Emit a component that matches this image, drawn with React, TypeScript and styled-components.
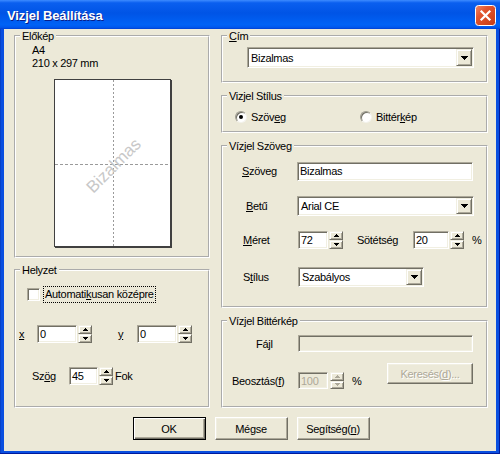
import React from 'react';
import styled, { createGlobalStyle } from 'styled-components';

const GlobalStyle = createGlobalStyle`
  html, body {
    margin: 0;
    padding: 0;
  }
  body {
    width: 500px;
    height: 454px;
    overflow: hidden;
    font-family: 'Liberation Sans', Arial, sans-serif;
    font-size: 11px;
    letter-spacing: -0.3px;
    color: #000;
    background: #ece9d8;
  }
`;

const Window = styled.div`
  width: 500px;
  height: 454px;
  display: flex;
  flex-direction: column;
  background: #0a4fe0;
`;

const TitleBar = styled.div`
  height: 29px;
  flex-shrink: 0;
  box-sizing: border-box;
  padding: 2px 4px 0 7px;
  display: flex;
  align-items: center;
  justify-content: space-between;
  background: linear-gradient(
    180deg,
    #3d8bff 0%,
    #0a5fef 10%,
    #0054e6 45%,
    #0062f6 85%,
    #0058ee 94%,
    #003fd2 100%
  );
`;

const Title = styled.span`
  color: #fff;
  font-weight: bold;
  font-size: 13px;
  letter-spacing: -0.1px;
  text-shadow: 1px 1px 0 #0a1e8a;
`;

const Frame = styled.div`
  flex: 1;
  display: flex;
  padding: 0 4px 3px 4px;
  box-shadow: inset -1px -1px 0 #001a9c, inset 1px 0 0 #0842c8;
`;

const Client = styled.div`
  flex: 1;
  display: flex;
  flex-direction: column;
  background: #ece9d8;
  padding: 1px 8px 11px 10px;
`;

const Columns = styled.div`
  display: flex;
  gap: 11px;
`;

const Column = styled.div<{ $w: number; $gap: number }>`
  width: ${(p) => p.$w}px;
  display: flex;
  flex-direction: column;
  gap: ${(p) => p.$gap}px;
`;

const Group = styled.fieldset<{ $h: number }>`
  margin: 0;
  padding: 0;
  min-width: 0;
  height: ${(p) => p.$h}px;
  box-sizing: border-box;
  border: 2px groove #fff;
`;

const Legend = styled.legend`
  margin-left: 4px;
  padding: 0 2px;
  font-size: 11px;
  line-height: 12px;
`;

const Key = styled.span`
  text-decoration: underline;
  text-underline-offset: 1px;
`;

const Info = styled.div`
  padding: 2px 0 0 16px;
  line-height: 13px;
`;

const Page = styled.div`
  position: relative;
  width: 117px;
  height: 168px;
  box-sizing: border-box;
  margin: 9px auto 0;
  background: #fff;
  border: 1px solid #404040;
  box-shadow: 1px 1px 0 #404040;
  overflow: hidden;

  &::before {
    content: '';
    position: absolute;
    top: 0;
    bottom: 0;
    left: 58px;
    width: 1px;
    background: repeating-linear-gradient(180deg, #9a9a9a 0 2px, transparent 2px 4px);
  }
  &::after {
    content: '';
    position: absolute;
    left: 0;
    right: 0;
    top: 84px;
    height: 1px;
    background: repeating-linear-gradient(90deg, #9a9a9a 0 3px, transparent 3px 5px);
  }
`;

const Watermark = styled.span`
  position: absolute;
  left: 50%;
  top: calc(50% + 3px);
  transform: translate(-47%, -50%) rotate(-45deg);
  font-size: 17px;
  letter-spacing: 0;
  color: #c8c8c8;
  white-space: nowrap;
  z-index: 1;
`;

const Row = styled.div<{ $top?: number; $pl?: number; $h?: number; $pr?: number; $align?: string }>`
  display: flex;
  align-items: ${(p) => p.$align ?? 'center'};
  margin-top: ${(p) => p.$top ?? 0}px;
  padding-left: ${(p) => p.$pl ?? 0}px;
  padding-right: ${(p) => p.$pr ?? 0}px;
  height: ${(p) => (p.$h ? `${p.$h}px` : 'auto')};
`;

const Inline = styled.div<{ $top?: number }>`
  display: flex;
  align-items: center;
  margin-top: ${(p) => p.$top ?? 0}px;
`;

const FieldLabel = styled.span<{ $w?: number; $pl?: number; $ml?: number }>`
  flex-shrink: 0;
  box-sizing: border-box;
  width: ${(p) => (p.$w ? `${p.$w}px` : 'auto')};
  padding-left: ${(p) => p.$pl ?? 0}px;
  margin-left: ${(p) => p.$ml ?? 0}px;
  white-space: nowrap;
`;

const TextBox = styled.div<{ $w: number; $h: number; $disabled?: boolean }>`
  flex-shrink: 0;
  width: ${(p) => p.$w}px;
  height: ${(p) => p.$h}px;
  box-sizing: border-box;
  display: flex;
  align-items: center;
  padding: 0 2px;
  background: ${(p) => (p.$disabled ? '#ece9d8' : '#fff')};
  color: ${(p) => (p.$disabled ? '#aca899' : '#000')};
  border: 1px solid;
  border-color: #aca899 #fff #fff #aca899;
  box-shadow: inset 1px 1px 0 #716f64, inset -1px -1px 0 #f1efe2;
  white-space: nowrap;
`;

const ComboBox = styled(TextBox)`
  justify-content: space-between;
  padding: 1px 1px 1px 3px;
`;

const Raised = styled.div`
  box-sizing: border-box;
  background: #ece9d8;
  border: 1px solid;
  border-color: #f1efe2 #716f64 #716f64 #f1efe2;
  box-shadow: inset 1px 1px 0 #fff, inset -1px -1px 0 #aca899;
  display: flex;
  align-items: center;
  justify-content: center;
`;

const DropButton = styled(Raised)`
  width: 16px;
  height: 100%;
  flex-shrink: 0;
`;

const Spin = styled.div<{ $h: number; $ml?: number }>`
  flex-shrink: 0;
  width: 14px;
  height: ${(p) => p.$h}px;
  margin-left: ${(p) => p.$ml ?? 1}px;
  display: flex;
  flex-direction: column;
`;

const SpinHalf = styled(Raised)`
  flex: 1;
`;

const CheckBox = styled.span`
  width: 13px;
  height: 13px;
  box-sizing: border-box;
  flex-shrink: 0;
  background: #fff;
  border: 1px solid;
  border-color: #aca899 #fff #fff #aca899;
  box-shadow: inset 1px 1px 0 #716f64, inset -1px -1px 0 #f1efe2;
`;

const FocusLabel = styled.span`
  margin-left: 3px;
  padding: 0 1px;
  line-height: 15px;
  border: 1px dotted #000;
  white-space: nowrap;
`;

const RadioOption = styled.div<{ $w?: number }>`
  display: flex;
  align-items: center;
  width: ${(p) => (p.$w ? `${p.$w}px` : 'auto')};
`;

const Radio = styled.span<{ $checked?: boolean }>`
  position: relative;
  width: 12px;
  height: 12px;
  box-sizing: border-box;
  border-radius: 50%;
  margin-right: 4px;
  background: radial-gradient(circle at 60% 60%, #fff 55%, #e6e4dc 100%);
  border: 1px solid;
  border-color: #9d9b90 #f4f3ee #f4f3ee #9d9b90;
  box-shadow: inset 1px 1px 0 #716f64;
  &::after {
    content: '';
    display: ${(p) => (p.$checked ? 'block' : 'none')};
    position: absolute;
    left: 3px;
    top: 3px;
    width: 4px;
    height: 4px;
    border-radius: 50%;
    background: #000;
  }
`;

const PushButton = styled.div<{ $w: number; $h: number; $default?: boolean; $disabled?: boolean }>`
  width: ${(p) => p.$w}px;
  height: ${(p) => p.$h}px;
  box-sizing: border-box;
  flex-shrink: 0;
  display: flex;
  align-items: center;
  justify-content: center;
  background: #ece9d8;
  color: ${(p) => (p.$disabled ? '#aca899' : '#000')};
  text-shadow: ${(p) => (p.$disabled ? '1px 1px 0 #fff' : 'none')};
  border: 1px solid;
  border-color: ${(p) => (p.$default ? '#000' : '#fff #716f64 #716f64 #fff')};
  box-shadow: ${(p) =>
    p.$default
      ? 'inset 1px 1px 0 #fff, inset -1px -1px 0 #716f64, inset -2px -2px 0 #aca899'
      : 'inset -1px -1px 0 #aca899, inset 1px 1px 0 #f1efe2'};
  white-space: nowrap;
`;

const PushAside = styled(PushButton)`
  margin-left: auto;
`;

const ButtonBar = styled.div`
  display: flex;
  justify-content: center;
  gap: 9px;
  margin-top: 9px;
`;

const Suffix = styled.span<{ $ml: number }>`
  margin-left: ${(p) => p.$ml}px;
`;

const ArrowUp = ({ color = '#000' }: { color?: string }) => (
  <svg width="5" height="3" viewBox="0 0 5 3">
    <path d="M2 0h1v1h1v1h1v1H0V2h1V1h1z" fill={color} />
  </svg>
);

const ArrowDown = ({ color = '#000' }: { color?: string }) => (
  <svg width="5" height="3" viewBox="0 0 5 3">
    <path d="M0 0h5v1H4v1H3v1H2V2H1V1H0z" fill={color} />
  </svg>
);

const ComboArrow = () => (
  <svg width="7" height="4" viewBox="0 0 7 4">
    <path d="M0 0h7v1H6v1H5v1H4v1H3V3H2V2H1V1H0z" fill="#000" />
  </svg>
);

const CloseIcon = () => (
  <svg width="21" height="21" viewBox="0 0 21 21">
    <defs>
      <linearGradient id="closeFill" x1="0" y1="0" x2="1" y2="1">
        <stop offset="0" stopColor="#f08a6a" />
        <stop offset="0.35" stopColor="#e2552f" />
        <stop offset="1" stopColor="#c43a14" />
      </linearGradient>
    </defs>
    <rect x="0.5" y="0.5" width="20" height="20" rx="3" fill="url(#closeFill)" stroke="#fff" />
    <path d="M6.5 6.5l8 8M14.5 6.5l-8 8" stroke="#fff" strokeWidth="2.2" strokeLinecap="square" />
  </svg>
);

const SpinBox = ({ h, ml, disabled }: { h: number; ml?: number; disabled?: boolean }) => {
  const c = disabled ? '#aca899' : '#000';
  return (
    <Spin $h={h} $ml={ml}>
      <SpinHalf>
        <ArrowUp color={c} />
      </SpinHalf>
      <SpinHalf>
        <ArrowDown color={c} />
      </SpinHalf>
    </Spin>
  );
};

const Dropdown = ({ w, h, value }: { w: number; h: number; value: string }) => (
  <ComboBox $w={w} $h={h}>
    <span>{value}</span>
    <DropButton>
      <ComboArrow />
    </DropButton>
  </ComboBox>
);

export default function App() {
  return (
    <>
      <GlobalStyle />
      <Window>
        <TitleBar>
          <Title>Vizjel Beállítása</Title>
          <CloseIcon />
        </TitleBar>
        <Frame>
          <Client>
            <Columns>
              <Column $w={196} $gap={6}>
                <Group $h={228}>
                  <Legend>Előkép</Legend>
                  <Info>
                    <div>A4</div>
                    <div>210 x 297 mm</div>
                  </Info>
                  <Page>
                    <Watermark>Bizalmas</Watermark>
                  </Page>
                </Group>

                <Group $h={144}>
                  <Legend>Helyzet</Legend>
                  <Row $top={10} $pl={11} $h={17}>
                    <CheckBox />
                    <FocusLabel>
                      Automati<Key>k</Key>usan középre
                    </FocusLabel>
                  </Row>
                  <Row $top={22} $pl={3} $h={18}>
                    <FieldLabel $w={18}>
                      <Key>x</Key>
                    </FieldLabel>
                    <TextBox $w={40} $h={18}>0</TextBox>
                    <SpinBox h={18} />
                    <FieldLabel $w={19} $ml={26}>
                      <Key>y</Key>
                    </FieldLabel>
                    <TextBox $w={40} $h={18}>0</TextBox>
                    <SpinBox h={18} />
                  </Row>
                  <Row $top={24} $pl={16} $h={18}>
                    <FieldLabel $w={37}>
                      Sz<Key>ö</Key>g
                    </FieldLabel>
                    <TextBox $w={29} $h={18}>45</TextBox>
                    <SpinBox h={18} />
                    <Suffix $ml={2}>Fok</Suffix>
                  </Row>
                </Group>
              </Column>

              <Column $w={267} $gap={7}>
                <Group $h={53}>
                  <Legend>
                    <Key>C</Key>ím
                  </Legend>
                  <Row $top={5} $pl={24}>
                    <Dropdown w={227} h={21} value="Bizalmas" />
                  </Row>
                </Group>

                <Group $h={43}>
                  <Legend>Vizjel Stílus</Legend>
                  <Row $top={7} $pl={12} $h={15}>
                    <RadioOption $w={125}>
                      <Radio $checked />
                      Szöv<Key>e</Key>g
                    </RadioOption>
                    <RadioOption>
                      <Radio />
                      Bittér<Key>k</Key>ép
                    </RadioOption>
                  </Row>
                </Group>

                <Group $h={168}>
                  <Legend>Vízjel Szöveg</Legend>
                  <Row $top={9} $h={20}>
                    <FieldLabel $w={74} $pl={19}>
                      <Key>S</Key>zöveg
                    </FieldLabel>
                    <TextBox $w={176} $h={19}>Bizalmas</TextBox>
                  </Row>
                  <Row $top={15} $h={20}>
                    <FieldLabel $w={74} $pl={23}>
                      <Key>B</Key>etű
                    </FieldLabel>
                    <Dropdown w={177} h={20} value="Arial CE" />
                  </Row>
                  <Row $top={14} $h={19}>
                    <FieldLabel $w={75} $pl={20}>
                      <Key>M</Key>éret
                    </FieldLabel>
                    <TextBox $w={30} $h={18}>72</TextBox>
                    <SpinBox h={18} />
                    <FieldLabel $w={56} $ml={14}>
                      Sötétsé<Key>g</Key>
                    </FieldLabel>
                    <TextBox $w={36} $h={18}>20</TextBox>
                    <SpinBox h={18} />
                    <Suffix $ml={8}>%</Suffix>
                  </Row>
                  <Row $top={18} $h={20}>
                    <FieldLabel $w={75} $pl={20}>
                      S<Key>t</Key>ílus
                    </FieldLabel>
                    <Dropdown w={126} h={20} value="Szabályos" />
                  </Row>
                </Group>

                <Group $h={93}>
                  <Legend>Vízjel Bittérkép</Legend>
                  <Row $top={8} $h={17}>
                    <FieldLabel $w={75} $pl={33}>
                      Fájl
                    </FieldLabel>
                    <TextBox $w={175} $h={17} $disabled />
                  </Row>
                  <Row $top={11} $pr={13} $align="flex-start">
                    <Inline $top={9}>
                      <FieldLabel $w={75} $pl={9}>
                        Beosztás(<Key>f</Key>)
                      </FieldLabel>
                      <TextBox $w={30} $h={17} $disabled>
                        100
                      </TextBox>
                      <SpinBox h={17} ml={2} disabled />
                      <Suffix $ml={8}>%</Suffix>
                    </Inline>
                    <PushAside $w={86} $h={21} $disabled>
                      Keresés(<Key>d</Key>)...
                    </PushAside>
                  </Row>
                </Group>
              </Column>
            </Columns>

            <ButtonBar>
              <PushButton $w={73} $h={23} $default>
                OK
              </PushButton>
              <PushButton $w={73} $h={23}>
                Mégse
              </PushButton>
              <PushButton $w={73} $h={23}>
                Segítség(<Key>n</Key>)
              </PushButton>
            </ButtonBar>
          </Client>
        </Frame>
      </Window>
    </>
  );
}
